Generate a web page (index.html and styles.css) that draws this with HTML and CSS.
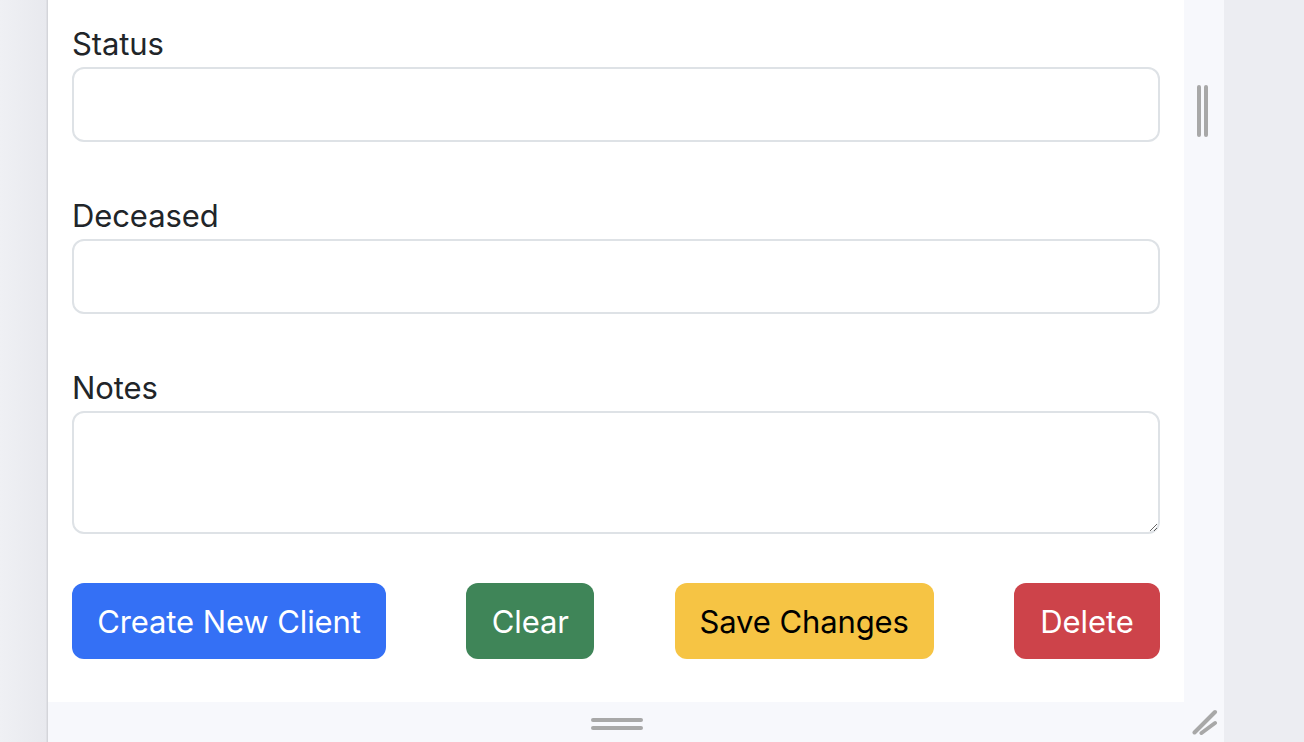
FILE: index.html
```html
<!DOCTYPE html>
<html lang="en">
<head>
<meta charset="utf-8">
<title>Client form</title>
<link rel="stylesheet" href="styles.css">
</head>
<body>
<div class="layout">
  <div class="gutter"></div>
  <div class="frame">
    <div class="frame-row">
      <main class="panel">
        <div class="field">
          <label class="label" for="status">Status</label>
          <input class="control" id="status" type="text">
        </div>
        <div class="field">
          <label class="label" for="deceased">Deceased</label>
          <input class="control" id="deceased" type="text">
        </div>
        <div class="field field-last">
          <label class="label" for="notes">Notes</label>
          <textarea class="control area" id="notes"></textarea>
        </div>
        <div class="actions">
          <button class="btn btn-blue">Create New Client</button>
          <button class="btn btn-green">Clear</button>
          <button class="btn btn-yellow">Save Changes</button>
          <button class="btn btn-red">Delete</button>
        </div>
      </main>
      <div class="side-strip">
        <div class="vhandle"><span></span><span></span></div>
      </div>
    </div>
    <div class="bottom-strip">
      <div class="hhandle"><span></span><span></span></div>
      <svg class="grip" width="26" height="26" viewBox="0 0 26 26">
        <line x1="2.5" y1="23.5" x2="23" y2="3" stroke="#a8a8a8" stroke-width="4" stroke-linecap="round"/>
        <line x1="9.5" y1="24" x2="23" y2="14" stroke="#a8a8a8" stroke-width="4" stroke-linecap="round"/>
      </svg>
    </div>
  </div>
  <div class="rest"></div>
</div>
</body>
</html>
```

FILE: styles.css
```css
* { box-sizing: border-box; }
html, body {
  margin: 0;
  padding: 0;
  height: 100%;
  overflow: hidden;
  background: #ecedf2;
  font-family: Inter, "Liberation Sans", sans-serif;
  color: #212529;
}
.layout {
  display: flex;
  height: 742px;
}
.gutter {
  width: 48px;
  flex: none;
  background: linear-gradient(to right, #eff0f4 0%, #e8e9ee 96%, #d4d5da 98%, #d4d5da 100%);
}
.frame {
  width: 1176px;
  flex: none;
  display: flex;
  flex-direction: column;
}
.frame-row {
  display: flex;
  height: 702px;
}
.panel {
  width: 1136px;
  background: #ffffff;
  padding: 24px 24px 0 24px;
}
.field {
  display: flex;
  flex-direction: column;
  margin-bottom: 54px;
}
.field-last {
  margin-bottom: 49px;
}
.label {
  font-size: 31px;
  line-height: 40px;
  margin-bottom: 3px;
  letter-spacing: -0.1px;
}
.control {
  height: 75px;
  border: 2px solid #dee2e6;
  border-radius: 12px;
  background: #fff;
  font: inherit;
  font-size: 31px;
  padding: 12px 24px;
  outline: none;
}
.area {
  height: 123px;
  resize: vertical;
}
.actions {
  display: flex;
  justify-content: space-between;
}
.btn {
  height: 76px;
  border: none;
  border-radius: 12px;
  font-family: inherit;
  font-size: 31px;
  padding: 0;
  color: #fff;
  letter-spacing: -0.1px;
}
.btn-blue { background: #3470f5; width: 314px; }
.btn-green { background: #3f8558; width: 128px; }
.btn-yellow { background: #f6c444; color: #000; width: 259px; }
.btn-red { background: #cd434a; width: 146px; }
.side-strip {
  width: 40px;
  background: #f7f8fc;
  padding-top: 85px;
  display: flex;
  justify-content: center;
}
.vhandle {
  display: flex;
  gap: 3px;
  height: 52px;
  margin-left: -4px;
}
.vhandle span {
  width: 4px;
  height: 52px;
  border-radius: 2px;
  background: #a8a8a8;
}
.bottom-strip {
  position: relative;
  height: 40px;
  background: #f7f8fc;
  display: flex;
  justify-content: center;
  padding-top: 16px;
}
.hhandle {
  display: flex;
  flex-direction: column;
  gap: 4px;
  margin-left: -38px;
}
.hhandle span {
  width: 52px;
  height: 4px;
  border-radius: 2px;
  background: #a8a8a8;
}
.grip {
  position: absolute;
  right: 6px;
  bottom: 7px;
}
.rest {
  flex: 1;
  background: #ecedf2;
}
```
